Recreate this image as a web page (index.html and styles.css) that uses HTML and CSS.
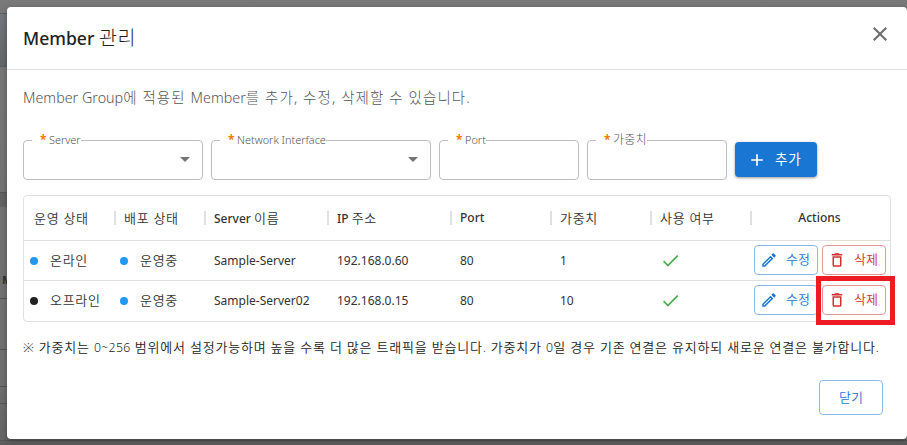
FILE: index.html
```html
<!DOCTYPE html>
<html lang="ko">
<head>
<meta charset="utf-8">
<title>Member 관리</title>
<link rel="stylesheet" href="styles.css">
</head>
<body>
<svg class="sprite" aria-hidden="true">
  <symbol id="close" viewBox="0 0 24 24"><path d="M19 6.41 17.59 5 12 10.59 6.41 5 5 6.41 10.59 12 5 17.59 6.41 19 12 13.41 17.59 19 19 17.59 13.41 12z"/></symbol>
  <symbol id="plus" viewBox="0 0 24 24"><path d="M19 13h-6v6h-2v-6H5v-2h6V5h2v6h6z"/></symbol>
  <symbol id="arrow" viewBox="0 0 24 24"><path d="m7 10 5 5 5-5z"/></symbol>
  <symbol id="check" viewBox="0 0 24 24"><path d="M9 16.17 4.83 12l-1.42 1.41L9 19 21 7l-1.41-1.41z"/></symbol>
  <symbol id="edit" viewBox="0 0 24 24"><path d="m14.06 9.02.92.92L5.92 19H5v-.92l9.06-9.06M17.66 3c-.25 0-.51.1-.7.29l-1.83 1.83 3.75 3.75 1.83-1.83c.39-.39.39-1.02 0-1.41l-2.34-2.34c-.2-.2-.45-.29-.71-.29zm-3.6 3.19L3 17.25V21h3.75L17.81 9.94l-3.75-3.75z"/></symbol>
  <symbol id="trash" viewBox="0 0 24 24"><path d="M6 19c0 1.1.9 2 2 2h8c1.1 0 2-.9 2-2V7H6v12zM8 9h8v10H8V9zm7.5-5-1-1h-5l-1 1H5v2h14V4z"/></symbol>
</svg>
<div class="page-edge"><i class="tint"></i><i class="line l1"></i><i class="band"></i><b>M</b><i class="line l2"></i><i class="line l3"></i><i class="line l4"></i><i class="line l5"></i><i class="line l6"></i></div>
<main class="dialog">
  <header class="head">
    <h1><span class="title-en">Member</span> <span class="title-ko">관리</span></h1>
    <svg class="x"><use href="#close"/></svg>
  </header>
  <section class="body">
    <p class="desc">Member Group<span>에 적용된 </span>Member<span>를 추가, 수정, 삭제할 수 있습니다.</span></p>
    <form class="form">
      <fieldset class="field server"><legend><em>*</em><span>Server</span></legend><svg class="caret"><use href="#arrow"/></svg></fieldset>
      <fieldset class="field nic"><legend><em>*</em><span>Network Interface</span></legend><svg class="caret"><use href="#arrow"/></svg></fieldset>
      <fieldset class="field small"><legend><em>*</em><span>Port</span></legend></fieldset>
      <fieldset class="field small"><legend><em>*</em><span class="ko">가중치</span></legend></fieldset>
      <button class="add" type="button"><svg><use href="#plus"/></svg><span>추가</span></button>
    </form>
    <div class="table">
      <div class="row header">
        <div><span class="ko">운영 상태</span></div><div><span class="ko">배포 상태</span></div><div><span>Server <span class="ko">이름</span></span></div><div><span>IP <span class="ko">주소</span></span></div><div><span>Port</span></div><div><span class="ko">가중치</span></div><div><span class="ko">사용 여부</span></div><div class="center"><span>Actions</span></div>
      </div>
      <div class="row">
        <div class="state"><i class="dot"></i><span class="ko">온라인</span></div><div class="state"><i class="dot"></i><span class="ko">운영중</span></div><div>Sample-Server</div><div>192.168.0.60</div><div>80</div><div>1</div><div><svg class="check"><use href="#check"/></svg></div>
        <div class="actions"><button class="btn edit"><svg><use href="#edit"/></svg><span>수정</span></button><button class="btn del"><svg><use href="#trash"/></svg><span>삭제</span></button></div>
      </div>
      <div class="row">
        <div class="state"><i class="dot off"></i><span class="ko">오프라인</span></div><div class="state"><i class="dot"></i><span class="ko">운영중</span></div><div>Sample-Server02</div><div>192.168.0.15</div><div>80</div><div>10</div><div><svg class="check"><use href="#check"/></svg></div>
        <div class="actions"><button class="btn edit"><svg><use href="#edit"/></svg><span>수정</span></button><button class="btn del marked"><svg><use href="#trash"/></svg><span>삭제</span></button></div>
      </div>
    </div>
    <p class="note">※ 가중치는 <span>0~256</span> 범위에서 설정가능하며 높을 수록 더 많은 트래픽을 받습니다. 가중치가 <span>0</span>일 경우 기존 연결은 유지하되 새로운 연결은 불가합니다.</p>
  </section>
  <footer class="foot"><button class="dismiss">닫기</button></footer>
</main>
</body>
</html>
```
FILE: styles.css
```css
*, *::before, *::after { box-sizing: border-box; }
body {
  margin: 0;
  width: 907px;
  height: 445px;
  overflow: hidden;
  padding: 7px 0 0 7px;
  background: linear-gradient(#797979 0, #777 7px, #6d6d6d 380px, #636363 439px, #5c5c5c 445px);
  font: 400 12px/20px "Noto Sans", "Noto Sans CJK KR", sans-serif;
  color: #333;
}
.sprite { position: absolute; width: 0; height: 0; }
svg { fill: currentColor; flex: none; }
button { font: inherit; margin: 0; padding: 0; background: #fff; }
h1, p { margin: 0; white-space: nowrap; }

/* Dimmed page visible beside the dialog */
.page-edge { position: absolute; left: 0; top: 0; width: 907px; height: 445px; overflow: hidden; }
.page-edge i { position: absolute; left: 0; width: 7px; }
.page-edge .tint { top: 13px; height: 54px; background: linear-gradient(#70767b, #5f656a); border: solid #5f5f5f; border-width: 1px 0; }
.page-edge .band { top: 193px; height: 14px; background: #626262; }
.page-edge b { position: absolute; left: 2px; top: 270px; font-size: 11px; color: #2f2f2f; }
.page-edge .line { height: 1px; background: #535353; }
.page-edge .l1 { top: 192px; }
.page-edge .l2 { top: 298px; }
.page-edge .l3 { top: 349px; }
.page-edge .l4 { top: 386px; }
.page-edge .l5 { top: 403px; }
.page-edge .l6 { top: 440px; width: 907px; }

.dialog {
  position: relative;
  width: 900px;
  height: 432px;
  background: #fff;
  border-radius: 4px;
  box-shadow: 0 2px 5px rgba(0, 0, 0, .3);
}
.head {
  height: 63px;
  padding: 0 15px 0 16px;
  display: flex;
  align-items: center;
  justify-content: space-between;
  border-bottom: 1px solid #e0e0e0;
}
h1 { font-size: 17.6px; line-height: 28px; font-weight: 500; color: #222; }
.title-ko { font-size: 19.5px; font-weight: 300; letter-spacing: .6px; }
.x { width: 24px; height: 24px; color: #6b6b6b; margin-top: -8px; }
.body { padding: 14px 16px 0; }
.desc { font-size: 14.3px; line-height: 26px; font-weight: 300; color: #555; }
.desc span { font-size: 14.5px; letter-spacing: 1.08px; }
.form { display: flex; gap: 8px; margin-top: 23px; }
.field {
  position: relative;
  height: 46px;
  margin: 0;
  min-width: 0;
  padding: 0 0 0 8px;
  border: 1px solid #bdbdbd;
  border-radius: 4px;
}
.server { width: 180px; }
.nic { width: 220px; }
.small { width: 140px; }
legend {
  display: flex;
  height: 12px;
  padding: 0 0 0 8px;
  font-size: 10.9px;
  line-height: 12px;
  font-weight: 300;
  color: #555;
}
legend em { width: 9px; font: 700 12px/12px "Noto Sans"; color: #f57c00; }
.caret { position: absolute; right: 5px; top: 1px; width: 24px; height: 24px; color: #757575; }
.add {
  display: flex;
  align-items: center;
  width: 82px;
  height: 35px;
  margin-top: 8px;
  padding-left: 12px;
  gap: 8px;
  border: 0;
  border-radius: 4px;
  background: #1976d2;
  color: #fff;
  font-size: 13.5px;
  box-shadow: 0 1px 3px rgba(0, 0, 0, .4);
}
.add span { letter-spacing: .8px; margin-top: -2px; }
.add svg { width: 20px; height: 20px; }
.table { margin-top: 15px; border: 1px solid #e0e0e0; border-radius: 4px; height: 127px; }
.row {
  display: grid;
  grid-template-columns: 91px 90px 123px 123px 100px 100px 100px 139px;
  height: 40px;
  border-top: 1px solid #e0e0e0;
}
.row > div { display: flex; align-items: center; padding-left: 9px; white-space: nowrap; }
.row.header { height: 44px; border: 0; font-weight: 500; }
.row.header > div { position: relative; }
.row.header > div:first-child { padding-left: 10px; }
.row.header > div:not(:last-child)::after {
  content: "";
  position: absolute;
  right: -1px;
  top: 15px;
  width: 2px;
  height: 14px;
  background: #e0e0e0;
}
.row.header .center { justify-content: center; padding: 0 2px 0 0; }
.ko { font-size: 13px; font-weight: 350; letter-spacing: .7px; }
.header .ko { font-weight: 350; }
.row.header > div > .ko { margin-top: -1px; }
legend .ko { font-size: 12px; font-weight: 300; letter-spacing: .2px; }
.row > .state { padding-left: 6px; gap: 12px; }
.row > .state + .state { padding-left: 5px; }
.state .ko { margin-top: -2px; }
.dot { width: 8px; height: 8px; border-radius: 50%; background: #2196f3; }
.dot.off { background: #212121; }
.check { width: 21px; height: 21px; color: #4caf50; }
.row > .actions { padding: 0 0 1px 3px; gap: 4px; }
.btn {
  position: relative;
  display: flex;
  align-items: center;
  gap: 7px;
  width: 64px;
  height: 30px;
  padding-left: 6px;
  border: 1px solid;
  border-radius: 4px;
  font-size: 13px;
  font-weight: 350;
  line-height: 20px;
}
.btn svg { width: 18px; height: 18px; }
.btn span { margin-top: -2px; }
.edit { border-color: #8cbae8; color: #1976d2; }
.edit svg { margin-left: -1px; margin-right: 1px; }
.del { border-color: #e99797; color: #d32f2f; }
.del svg { margin-left: -1px; margin-right: 1px; }
/* Highlight frame around the delete action */
.marked::after {
  content: "";
  position: absolute;
  left: -7px;
  top: -10px;
  width: 79px;
  height: 49px;
  border: 5px solid #ed1c24;
}
.note { margin-top: 14px; font-size: 13px; line-height: 22px; font-weight: 350; letter-spacing: .79px; color: #222; }
.note span { font-size: 12.3px; letter-spacing: .3px; }
.foot { display: flex; justify-content: flex-end; padding: 21px 24px 0 0; }
.dismiss { width: 64px; height: 35px; border: 1px solid #8cbae8; border-radius: 4px; color: #1976d2; font-size: 13px; font-weight: 350; padding-bottom: 2px; }
```
